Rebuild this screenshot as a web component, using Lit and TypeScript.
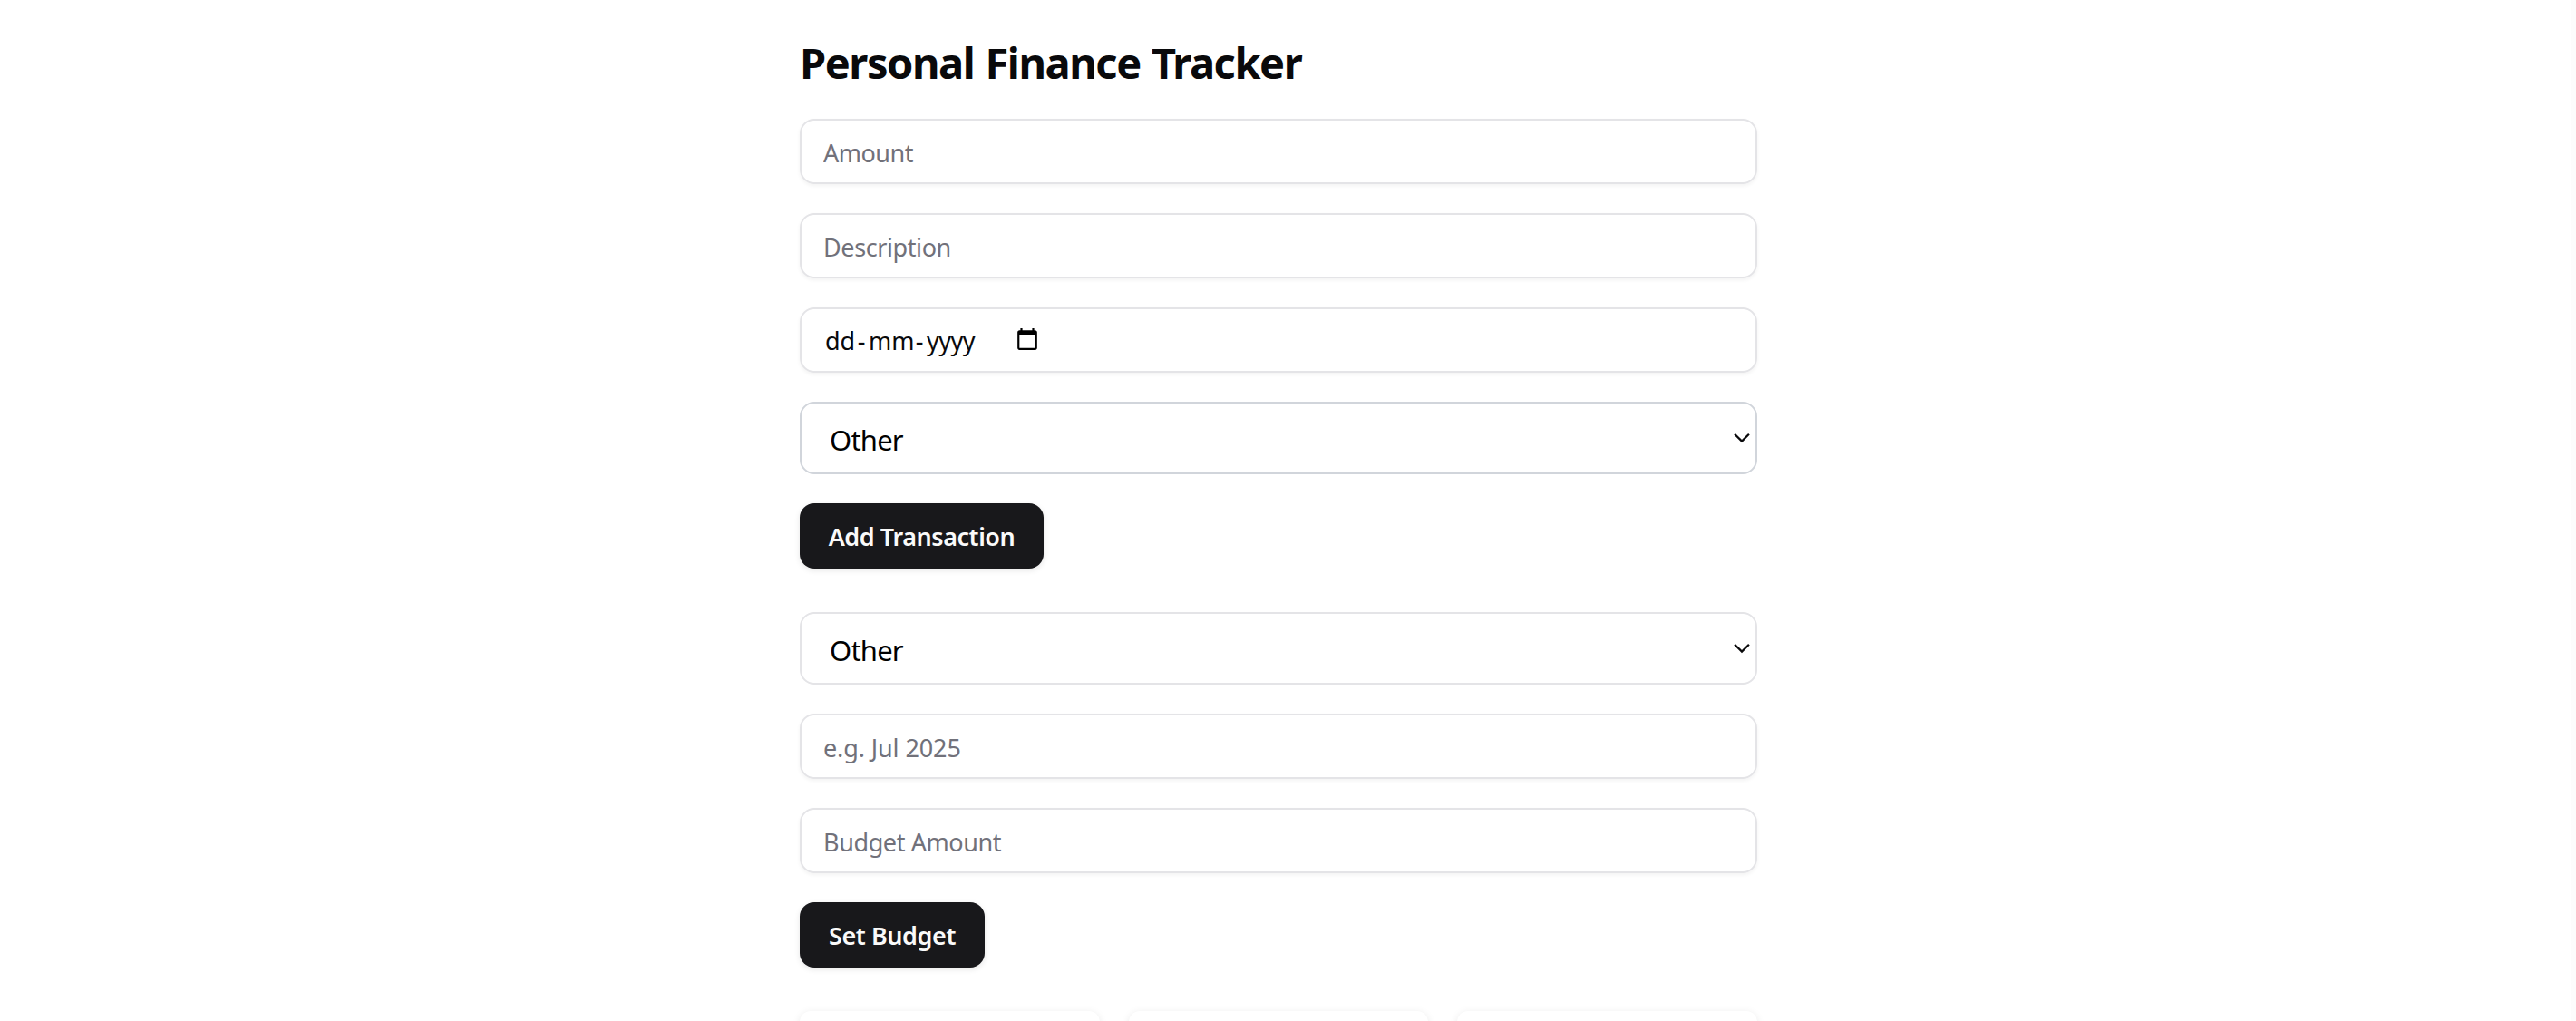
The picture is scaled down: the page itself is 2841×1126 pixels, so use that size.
import { LitElement, html, css } from "lit";
import { customElement } from "lit/decorators.js";

@customElement("app-root")
class AppRoot extends LitElement {
  static styles = css`
    :host {
      display: flex;
      height: 1126px;
      overflow: hidden;
      background: #fff;
      color: #09090b;
      font-family: "Noto Sans", "Open Sans", sans-serif;
    }
    * {
      box-sizing: border-box;
    }
    .page {
      flex: 1;
      padding-top: 32px;
    }
    .scrollbar {
      width: 6px;
      background: #fcfcfc;
    }
    .content {
      width: 1056px;
      margin-left: 882px;
    }
    h1 {
      margin: 0 0 25px;
      font-size: 47px;
      line-height: 74px;
      font-weight: 700;
      letter-spacing: -1.45px;
      word-spacing: 1.4px;
      white-space: nowrap;
    }
    .form {
      display: flex;
      flex-direction: column;
      align-items: flex-start;
      gap: 32px;
      margin-bottom: 48px;
    }
    .field {
      display: block;
      width: 100%;
      height: 72px;
      padding: 2px 24px 0;
      border: 2px solid #e4e4e7;
      border-radius: 16px;
      background: transparent;
      box-shadow: 0 2px 4px rgba(0, 0, 0, 0.05);
      color: inherit;
      font-family: inherit;
      font-size: 27px;
      letter-spacing: -0.4px;
      outline: none;
    }
    .field::placeholder {
      color: #71717a;
      opacity: 1;
    }
    .amount {
      letter-spacing: -0.5px;
    }
    .month {
      letter-spacing: -0.11px;
    }
    .date {
      display: flex;
      align-items: center;
      padding-top: 1px;
      padding-left: 26px;
      letter-spacing: 0;
    }
    .day {
      width: 32px;
    }
    .mon {
      width: 48px;
      text-align: center;
    }
    .sep {
      width: 16px;
      text-align: center;
    }
    .year {
      width: 56px;
      letter-spacing: -0.5px;
      white-space: nowrap;
    }
    .calendar {
      width: 26px;
      height: 26px;
      margin: 0 0 3px 42px;
    }
    .select {
      display: grid;
      width: 100%;
      height: 80px;
      border: 2px solid #e4e4e7;
      border-radius: 16px;
    }
    .strong {
      border-color: #d1d5db;
    }
    select {
      grid-area: 1 / 1;
      appearance: none;
      width: 100%;
      margin: 0;
      padding: 4px 31px 0;
      border: 0;
      background: transparent;
      color: #000;
      font-family: inherit;
      font-size: 31px;
      letter-spacing: -0.8px;
      outline: none;
    }
    .chevron {
      grid-area: 1 / 1;
      place-self: center end;
      width: 20px;
      height: 12px;
      margin-right: 5px;
      pointer-events: none;
    }
    button {
      height: 72px;
      padding: 0;
      border: 0;
      border-radius: 16px;
      background: #18181b;
      color: #fafafa;
      box-shadow: 0 2px 6px rgba(0, 0, 0, 0.1);
      font-family: inherit;
      font-size: 27px;
      font-weight: 600;
      letter-spacing: -0.44px;
      white-space: nowrap;
    }
    .add {
      width: 269px;
    }
    .set {
      width: 204px;
    }
    .cards {
      display: grid;
      grid-template-columns: repeat(3, 1fr);
      gap: 32px;
    }
    .card {
      height: 200px;
      border-radius: 12px;
      background: #fff;
      box-shadow: 0 2px 10px rgba(0, 0, 0, 0.09);
    }
  `;

  private select(extra: string) {
    return html`<div class="select ${extra}">
      <select>
        <option>Other</option>
      </select>
      <svg class="chevron" viewBox="0 0 20 12" fill="none" stroke="#09090b" stroke-width="2.3">
        <path d="M2.1 1.7 10 9.6l7.9-7.9" />
      </svg>
    </div>`;
  }

  render() {
    return html`
      <main class="page">
        <div class="content">
          <h1>Personal Finance Tracker</h1>
          <div class="form">
            <input class="field amount" placeholder="Amount" />
            <input class="field" placeholder="Description" />
            <div class="field date">
              <span class="day">dd</span><span class="sep">-</span><span class="mon">mm</span
              ><span class="sep">-</span><span class="year">yyyy</span>
              <svg class="calendar" viewBox="0 0 24 24" fill="#000">
                <path
                  d="M20 3h-1V1h-2v2H7V1H5v2H4c-1.1 0-2 .9-2 2v16c0 1.1.9 2 2 2h16c1.1 0 2-.9 2-2V5c0-1.1-.9-2-2-2zm0 18H4V8h16v13z"
                />
              </svg>
            </div>
            ${this.select("strong")}
            <button class="add">Add Transaction</button>
          </div>
          <div class="form">
            ${this.select("")}
            <input class="field month" placeholder="e.g. Jul 2025" />
            <input class="field" placeholder="Budget Amount" />
            <button class="set">Set Budget</button>
          </div>
          <div class="cards">
            <div class="card"></div>
            <div class="card"></div>
            <div class="card"></div>
          </div>
        </div>
      </main>
      <div class="scrollbar"></div>
    `;
  }
}
